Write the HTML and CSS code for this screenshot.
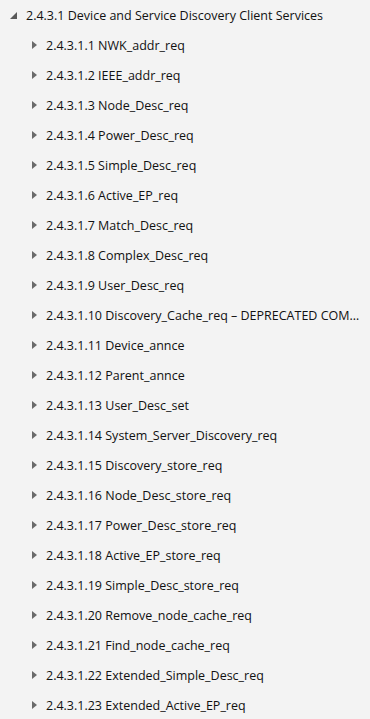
FILE: index.html
```html
<!DOCTYPE html>
<html lang="en">
<head>
    <meta charset="UTF-8">
    <meta name="viewport" content="width=device-width, initial-scale=1">
    <title>Discovery Client Services</title>
    <link rel="stylesheet" href="styles.css">
</head>
<body>
    <ul class="tree">
        <li class="node open">
            <div class="row">
                <svg class="caret" width="7" height="7" viewBox="0 0 7 7"><polygon points="7,0 7,7 0,7" /></svg>
                <span class="label">2.4.3.1 Device and Service Discovery Client Services</span>
            </div>
            <ul class="children">
                <li class="row child"><span class="arrow"></span><span class="label">2.4.3.1.1 NWK_addr_req</span></li>
                <li class="row child"><span class="arrow"></span><span class="label">2.4.3.1.2 IEEE_addr_req</span></li>
                <li class="row child"><span class="arrow"></span><span class="label">2.4.3.1.3 Node_Desc_req</span></li>
                <li class="row child"><span class="arrow"></span><span class="label">2.4.3.1.4 Power_Desc_req</span></li>
                <li class="row child"><span class="arrow"></span><span class="label">2.4.3.1.5 Simple_Desc_req</span></li>
                <li class="row child"><span class="arrow"></span><span class="label">2.4.3.1.6 Active_EP_req</span></li>
                <li class="row child"><span class="arrow"></span><span class="label">2.4.3.1.7 Match_Desc_req</span></li>
                <li class="row child"><span class="arrow"></span><span class="label">2.4.3.1.8 Complex_Desc_req</span></li>
                <li class="row child"><span class="arrow"></span><span class="label">2.4.3.1.9 User_Desc_req</span></li>
                <li class="row child"><span class="arrow"></span><span class="label">2.4.3.1.10 Discovery_Cache_req – DEPRECATED COMMAND</span></li>
                <li class="row child"><span class="arrow"></span><span class="label">2.4.3.1.11 Device_annce</span></li>
                <li class="row child"><span class="arrow"></span><span class="label">2.4.3.1.12 Parent_annce</span></li>
                <li class="row child"><span class="arrow"></span><span class="label">2.4.3.1.13 User_Desc_set</span></li>
                <li class="row child"><span class="arrow"></span><span class="label">2.4.3.1.14 System_Server_Discovery_req</span></li>
                <li class="row child"><span class="arrow"></span><span class="label">2.4.3.1.15 Discovery_store_req</span></li>
                <li class="row child"><span class="arrow"></span><span class="label">2.4.3.1.16 Node_Desc_store_req</span></li>
                <li class="row child"><span class="arrow"></span><span class="label">2.4.3.1.17 Power_Desc_store_req</span></li>
                <li class="row child"><span class="arrow"></span><span class="label">2.4.3.1.18 Active_EP_store_req</span></li>
                <li class="row child"><span class="arrow"></span><span class="label">2.4.3.1.19 Simple_Desc_store_req</span></li>
                <li class="row child"><span class="arrow"></span><span class="label">2.4.3.1.20 Remove_node_cache_req</span></li>
                <li class="row child"><span class="arrow"></span><span class="label">2.4.3.1.21 Find_node_cache_req</span></li>
                <li class="row child"><span class="arrow"></span><span class="label">2.4.3.1.22 Extended_Simple_Desc_req</span></li>
                <li class="row child"><span class="arrow"></span><span class="label">2.4.3.1.23 Extended_Active_EP_req</span></li>
            </ul>
        </li>
    </ul>
</body>
</html>
```

FILE: styles.css
```css
* {
    margin: 0;
    padding: 0;
    box-sizing: border-box;
}

body {
    font-family: "Open Sans", "Noto Sans", sans-serif;
    font-size: 12.5px;
    background: #f3f3f3;
    color: #111111;
    overflow: hidden;
}

.tree,
.children {
    list-style: none;
}

.row {
    display: flex;
    align-items: center;
    height: 30px;
    white-space: nowrap;
}

.node > .row {
    padding-left: 10px;
}

.caret {
    fill: #595959;
    margin-right: 9px;
    flex-shrink: 0;
}

.child {
    padding-left: 32px;
    padding-right: 9px;
}

.arrow {
    width: 0;
    height: 0;
    border-top: 4px solid transparent;
    border-bottom: 4px solid transparent;
    border-left: 5px solid #6a6a6a;
    margin-right: 9px;
    flex-shrink: 0;
}

.label {
    overflow: hidden;
    text-overflow: ellipsis;
}
```
